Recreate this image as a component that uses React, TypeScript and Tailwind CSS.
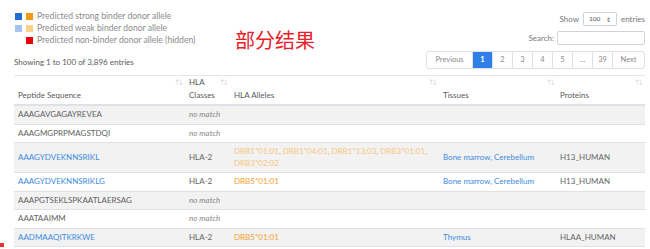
import React from 'react';

type Row = {
  seq: string;
  link?: boolean;
  hla?: string;
  alleles?: { text: string; weak?: boolean }[];
  tissues?: string;
  protein?: string;
};

const ROWS: Row[] = [
  { seq: 'AAAGAVGAGAYREVEA' },
  { seq: 'AAAGMGPRPMAGSTDQI' },
  {
    seq: 'AAAGYDVEKNNSRIKL',
    link: true,
    hla: 'HLA-2',
    alleles: [
      { text: 'DRB1*01:01', weak: true },
      { text: 'DRB1*04:01', weak: true },
      { text: 'DRB1*13:03', weak: true },
      { text: 'DRB3*01:01', weak: true },
      { text: 'DRB3*02:02', weak: true },
    ],
    tissues: 'Bone marrow, Cerebellum',
    protein: 'H13_HUMAN',
  },
  {
    seq: 'AAAGYDVEKNNSRIKLG',
    link: true,
    hla: 'HLA-2',
    alleles: [{ text: 'DRB5*01:01' }],
    tissues: 'Bone marrow, Cerebellum',
    protein: 'H13_HUMAN',
  },
  { seq: 'AAAPGTSEKLSPKAATLAERSAG' },
  { seq: 'AAATAAIMM' },
  {
    seq: 'AADMAAQITKRKWE',
    link: true,
    hla: 'HLA-2',
    alleles: [{ text: 'DRB5*01:01' }],
    tissues: 'Thymus',
    protein: 'HLAA_HUMAN',
  },
];

const SortIcon = () => (
  <span className="absolute right-[3px] top-[3px] text-[6px] leading-none tracking-[-1px] text-[#cfcfcf]">↑↓</span>
);

const Legend = ({ a, b, label }: { a?: string; b: string; label: string }) => (
  <div className="flex items-center h-[12px]">
    <span className="w-[7px] h-[7px] mr-[4px]" style={{ background: a ?? 'transparent' }} />
    <span className="w-[7px] h-[7px] mr-[4px]" style={{ background: b }} />
    <span>{label}</span>
  </div>
);

const pages = ['Previous', '1', '2', '3', '4', '5', '…', '39', 'Next'];

export default function App() {
  return (
    <div className="relative w-[650px] h-[249px] bg-white overflow-hidden text-[8px] text-[#666]" style={{ fontFamily: 'Lato, "Open Sans", "Noto Sans CJK SC", sans-serif' }}>
      <div className="flex h-[75px] pl-[14px] pr-[5px]">
        <div className="flex flex-col pt-[10px] w-[220px]">
          <div className="pl-[1px] text-[8.6px] text-[#8a8a8a]">
            <Legend a="#1f6fd6" b="#f49a12" label="Predicted strong binder donor allele" />
            <Legend a="#a6c4ee" b="#fbcf8c" label="Predicted weak binder donor allele" />
            <Legend b="#e8000b" label="Predicted non-binder donor allele (hidden)" />
          </div>
          <div className="mt-[10px] h-[12px] leading-[12px] text-[#5a5a5a]">Showing 1 to 100 of 3,896 entries</div>
        </div>
        <div className="pt-[28px] pl-[1px] text-[20px] leading-[24px] text-[#e8202a]" style={{ fontFamily: '"Noto Sans CJK SC", sans-serif' }}>
          部分结果
        </div>
        <div className="ml-auto flex flex-col items-end pt-[12px]">
          <div className="flex items-center h-[14px] text-[#777]">
            <span>Show</span>
            <span className="mx-[4px] flex items-center justify-between w-[34px] h-[14px] px-[5px] border border-[#ced4da] rounded-[2px] text-[6.5px] text-[#555]">
              100 <span className="text-[6px]">⇕</span>
            </span>
            <span>entries</span>
          </div>
          <div className="flex items-center h-[14px] mt-[5px] text-[#777]">
            <span className="mr-[3px]">Search:</span>
            <span className="w-[88px] h-[14px] border border-[#ced4da] rounded-[2px]" />
          </div>
          <div className="flex h-[18px] mt-[6px] text-[7.5px]">
            {pages.map((p) => (
              <span
                key={p}
                className={`flex items-center justify-center h-[18px] border border-[#dee2e6] -ml-px ${
                  p === 'Previous' ? 'w-[47px] rounded-l-[3px]' : p === 'Next' ? 'w-[33px] rounded-r-[3px]' : 'w-[21px]'
                } ${p === '1' ? 'bg-[#2f7fe8] border-[#2f7fe8] text-white font-bold' : 'text-[#8a8a8a]'}`}
              >
                {p}
              </span>
            ))}
          </div>
        </div>
      </div>

      <table className="ml-[14px] w-[631px] border-collapse table-fixed text-left">
        <colgroup>
          <col className="w-[171px]" />
          <col className="w-[45px]" />
          <col className="w-[209px]" />
          <col className="w-[118px]" />
          <col className="w-[88px]" />
        </colgroup>
        <thead>
          <tr className="h-[28px] border-t border-[#e4e6e9] border-b-2 border-b-[#dee2e6] text-[#5a5a5a]">
            <th className="relative align-bottom font-normal pl-[4px] pb-[2px] leading-[13px]">Peptide Sequence<SortIcon /></th>
            <th className="relative align-bottom font-normal pl-[4px] pb-[2px] leading-[13px]">HLA<br />Classes<SortIcon /></th>
            <th className="relative align-bottom font-normal pl-[4px] pb-[2px] leading-[13px]">HLA Alleles<SortIcon /></th>
            <th className="relative align-bottom font-normal pl-[4px] pb-[2px] leading-[13px]">Tissues<SortIcon /></th>
            <th className="relative align-bottom font-normal pl-[3px] pb-[2px] leading-[13px]">Proteins<SortIcon /></th>
          </tr>
        </thead>
        <tbody>
          {ROWS.map((r, i) => (
            <tr key={r.seq} className={`border-b border-[#dee2e6] ${i % 2 === 0 ? 'bg-[#f2f2f2]' : 'bg-white'}`}>
              <td className={`align-middle pl-[4px] py-[3px] leading-[11.5px] ${r.link ? 'text-[#3c8be0]' : 'text-[#5f5f5f]'}`}>{r.seq}</td>
              <td className={`align-middle pl-[4px] py-[3px] leading-[11.5px] ${r.hla ? 'text-[#666]' : 'italic text-[#888]'}`}>{r.hla ?? 'no match'}</td>
              <td className="align-middle pl-[4px] pr-[2px] py-[3px] leading-[11.5px]">
                {r.alleles?.map((a, j) => (
                  <span key={a.text} className={a.weak ? 'text-[#f7c67e]' : 'text-[#f2a22c]'}>
                    {a.text}
                    {j < r.alleles!.length - 1 && <span className="text-[#e9a94a]">, </span>}
                  </span>
                ))}
              </td>
              <td className="align-middle pl-[4px] py-[3px] leading-[11.5px] text-[#3c8be0]">{r.tissues}</td>
              <td className="align-middle pl-[3px] py-[3px] leading-[11.5px] text-[#666]">{r.protein}</td>
            </tr>
          ))}
        </tbody>
      </table>

      <span className="absolute left-0 top-[243px] w-[4px] h-[4px] bg-[#e33]" />
    </div>
  );
}
